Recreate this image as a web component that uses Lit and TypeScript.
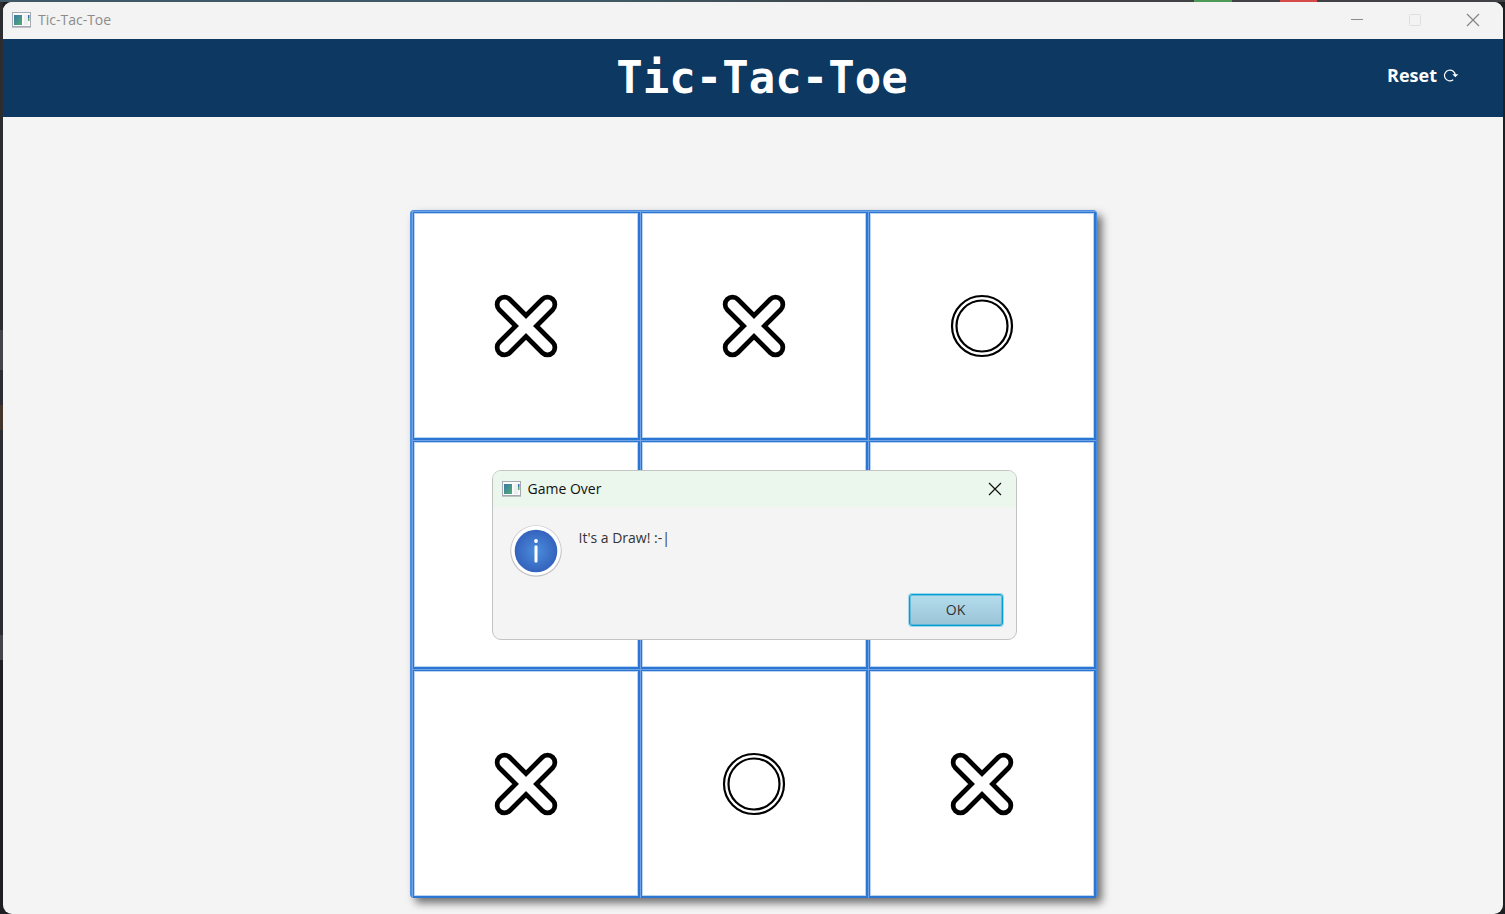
import { LitElement, html, svg, css } from "lit";
import { customElement, property, state } from "lit/decorators.js";

type Mark = "X" | "O" | "";

@customElement("app-glyph")
export class AppGlyph extends LitElement {
  static styles = css`
    :host { display: block; flex: none; }
    svg { display: block; }
  `;

  render() {
    return html`<svg width="20" height="16" viewBox="0 0 20 16" aria-hidden="true">
      <defs>
        <linearGradient id="pane" x1="0" y1="0" x2="1" y2="1">
          <stop offset="0" stop-color="#3d78a8"></stop>
          <stop offset="1" stop-color="#4fae74"></stop>
        </linearGradient>
      </defs>
      <rect x="0.5" y="0.5" width="18" height="14" fill="#fbfbfc" stroke="#a4a9b2"></rect>
      <path d="M0 15.5H19" stroke="#8d929b" stroke-opacity="0.5"></path>
      <rect x="2" y="3" width="8" height="10" fill="url(#pane)"></rect>
      <rect x="12" y="3" width="4" height="10" fill="#eceef0"></rect>
      <rect x="16" y="3" width="1.5" height="3" fill="#3e6fae"></rect>
      <rect x="16" y="6" width="1.5" height="3" fill="#56ac7a"></rect>
    </svg>`;
  }
}

@customElement("board-cell")
export class BoardCell extends LitElement {
  @property() mark: Mark = "";
  @property() label = "";

  static styles = css`
    :host { display: block; }
    .cell {
      display: grid;
      place-items: center;
      width: 100%;
      height: 229px;
      padding: 0;
      border: 0;
      border-radius: 0;
      background: #ffffff;
      box-shadow:
        inset 1px 1px 0 #6fa3e6,
        inset 0 0 0 2px #2a76d2,
        inset 0 0 0 3px #b9d3f2;
    }
    svg { display: block; }
  `;

  private drawMark() {
    if (this.mark === "X") {
      return svg`
        <path d="M10.5 10.5L53.5 53.5M53.5 10.5L10.5 53.5" fill="none" stroke="#000" stroke-width="19.5" stroke-linecap="round"></path>
        <path d="M10.5 10.5L53.5 53.5M53.5 10.5L10.5 53.5" fill="none" stroke="#fff" stroke-width="10" stroke-linecap="round"></path>`;
    }
    if (this.mark === "O") {
      return svg`
        <circle cx="32" cy="32" r="30" fill="none" stroke="#000" stroke-width="2.2"></circle>
        <circle cx="32" cy="32" r="25.5" fill="none" stroke="#000" stroke-width="2.2"></circle>`;
    }
    return null;
  }

  render() {
    return html`<button class="cell" aria-label=${this.label}>
      <svg width="64" height="64" viewBox="0 0 64 64" aria-hidden="true">${this.drawMark()}</svg>
    </button>`;
  }
}

@customElement("app-root")
export class AppRoot extends LitElement {
  @state() private cells: Mark[] = ["X", "X", "O", "", "", "", "X", "O", "X"];

  static styles = css`
    :host {
      display: block;
      box-sizing: border-box;
      min-height: 100vh;
      padding: 2px 2px 0 3px;
      font-family: "Open Sans", "Noto Sans", sans-serif;
      background:
        linear-gradient(90deg, transparent 1194px, #4e9a58 1194px 1232px, transparent 1232px 1280px, #d64a4a 1280px 1317px, transparent 1317px) 0 0 / 100% 2px no-repeat,
        linear-gradient(90deg, #3f5a66 600px, #3f4144 900px) 0 0 / 100% 2px no-repeat,
        linear-gradient(180deg, #2c2d31 330px, #44454b 330px 370px, #2b2d33 370px 405px, #43352c 405px 430px, #2b2d33 430px 635px, #44454b 635px 660px, #1e1f22 660px) 0 0 / 3px 100% no-repeat;
      background-color: #1e1f22;
    }
    * { box-sizing: border-box; }
    .window {
      display: flex;
      flex-direction: column;
      min-height: calc(100vh - 2px);
      overflow: hidden;
      border-radius: 9px;
      background: #f4f4f4;
    }
    .titlebar {
      display: flex;
      align-items: center;
      gap: 6px;
      height: 37px;
      padding: 0 1px 1px 9px;
      font-size: 14px;
      line-height: 20px;
      color: #8c8c8c;
      background: #f3f3f3;
    }
    .name { flex: 1; }
    .caption { display: flex; }
    .caption button, .close {
      display: grid;
      place-items: center;
      padding: 0;
      border: 0;
      background: none;
    }
    .caption button { width: 58px; height: 36px; }
    .caption svg, .close svg { display: block; }
    .header {
      display: grid;
      grid-template-columns: 1fr auto 1fr;
      align-items: center;
      height: 78px;
      padding: 0 26px 0 44px;
      color: #ffffff;
      background: #0c3862;
    }
    .header h1 {
      grid-column: 2;
      margin: 0;
      font: 700 44px/56px "DejaVu Sans Mono", monospace;
    }
    .reset {
      display: flex;
      justify-self: end;
      align-items: center;
      gap: 6px;
      padding: 0 18px 6px;
      border: 0;
      font: 700 18px/24px "Open Sans", "Noto Sans", sans-serif;
      color: inherit;
      background: none;
    }
    .stage {
      flex: 1;
      padding: 93px 16px 16px;
    }
    .board {
      position: relative;
      display: grid;
      grid-template-columns: repeat(3, 1fr);
      width: 100%;
      max-width: 687px;
      margin: 0 auto;
      border: solid #4a8de0;
      border-width: 1px 1px 0 2px;
      border-radius: 4px;
      background: #2a76d2;
      box-shadow: 5px 5px 8px rgba(0, 0, 0, 0.55);
    }
    .overlay {
      position: absolute;
      inset: 1px 0 0 1px;
      display: grid;
      place-items: center;
    }
    .dialog {
      width: 525px;
      max-width: 100%;
      overflow: hidden;
      border: 1px solid #c2c4c2;
      border-radius: 9px;
      color: #333333;
      background: #f4f4f4;
    }
    .dialog-bar {
      display: flex;
      align-items: center;
      gap: 6px;
      height: 36px;
      padding: 0 6px 0 9px;
      font-size: 14px;
      line-height: 20px;
      color: #111111;
      background: #ebf7ec;
    }
    .dialog-bar h2 {
      flex: 1;
      margin: 0;
      font-size: 14px;
      font-weight: 400;
    }
    .close { width: 30px; height: 30px; }
    .message {
      display: flex;
      gap: 17px;
      padding: 17px 17px 0;
      font-size: 14px;
      line-height: 20px;
    }
    .message p { margin: 0; padding-top: 4px; }
    .actions {
      display: flex;
      justify-content: flex-end;
      padding: 17px 13px 13px;
    }
    .ok {
      width: 94px;
      height: 32px;
      padding: 0;
      border: 1px solid #039ed3;
      border-radius: 3px;
      font: 400 14px/20px "Open Sans", "Noto Sans", sans-serif;
      color: #333333;
      background: linear-gradient(#b3dcec, #9cc4d8);
      box-shadow: 0 0 0 1px rgba(3, 158, 211, 0.35), inset 0 0 0 1px rgba(3, 158, 211, 0.4);
    }
  `;

  private crossIcon(color: string) {
    return html`<svg width="14" height="14" viewBox="0 0 14 14" aria-hidden="true">
      <path d="M1 1L13 13M13 1L1 13" stroke=${color} stroke-width="1.2" fill="none"></path>
    </svg>`;
  }

  render() {
    return html`
      <div class="window">
        <div class="titlebar">
          <app-glyph></app-glyph>
          <span class="name">Tic-Tac-Toe</span>
          <div class="caption">
            <button aria-label="Minimize">
              <svg width="14" height="14" viewBox="0 0 14 14"><path d="M1 6.5H13" stroke="#8c8c8c"></path></svg>
            </button>
            <button aria-label="Maximize" disabled>
              <svg width="14" height="14" viewBox="0 0 14 14"><rect x="1.5" y="1.5" width="11" height="11" rx="1" fill="none" stroke="#dedede"></rect></svg>
            </button>
            <button aria-label="Close window">${this.crossIcon("#858585")}</button>
          </div>
        </div>
        <header class="header">
          <h1>Tic-Tac-Toe</h1>
          <button class="reset">
            Reset
            <svg width="16" height="14" viewBox="0 0 16 14" aria-hidden="true">
              <path d="M10.2 11.8A5.4 5.4 0 1 1 12.3 7.5" fill="none" stroke="#fff" stroke-width="1.2"></path>
              <path d="M9.3 6.2H15.4L12.3 9.2Z" fill="#fff"></path>
            </svg>
          </button>
        </header>
        <main class="stage">
          <div class="board">
            ${this.cells.map(
              (mark, i) => html`<board-cell
                .mark=${mark}
                .label=${`Row ${Math.floor(i / 3) + 1}, column ${(i % 3) + 1}`}
              ></board-cell>`
            )}
            <div class="overlay">
              <section class="dialog" role="dialog" aria-labelledby="dialog-title">
                <div class="dialog-bar">
                  <app-glyph></app-glyph>
                  <h2 id="dialog-title">Game Over</h2>
                  <button class="close" aria-label="Close">${this.crossIcon("#111111")}</button>
                </div>
                <div class="message">
                  <svg width="52" height="53" viewBox="0 0 52 53" aria-hidden="true">
                    <defs>
                      <radialGradient id="blue">
                        <stop offset="0" stop-color="#4a8ddc"></stop>
                        <stop offset="1" stop-color="#3563bd"></stop>
                      </radialGradient>
                    </defs>
                    <circle cx="26" cy="27" r="25.8" fill="#c4c4c4"></circle>
                    <circle cx="26" cy="26.6" r="24.8" fill="#ffffff"></circle>
                    <circle cx="26" cy="27" r="21.3" fill="url(#blue)"></circle>
                    <circle cx="26" cy="17" r="1.9" fill="#fff"></circle>
                    <rect x="24.5" y="21.5" width="3" height="17" rx="1" fill="#fff"></rect>
                  </svg>
                  <p>It's a Draw! :-|</p>
                </div>
                <div class="actions"><button class="ok">OK</button></div>
              </section>
            </div>
          </div>
        </main>
      </div>
    `;
  }
}
